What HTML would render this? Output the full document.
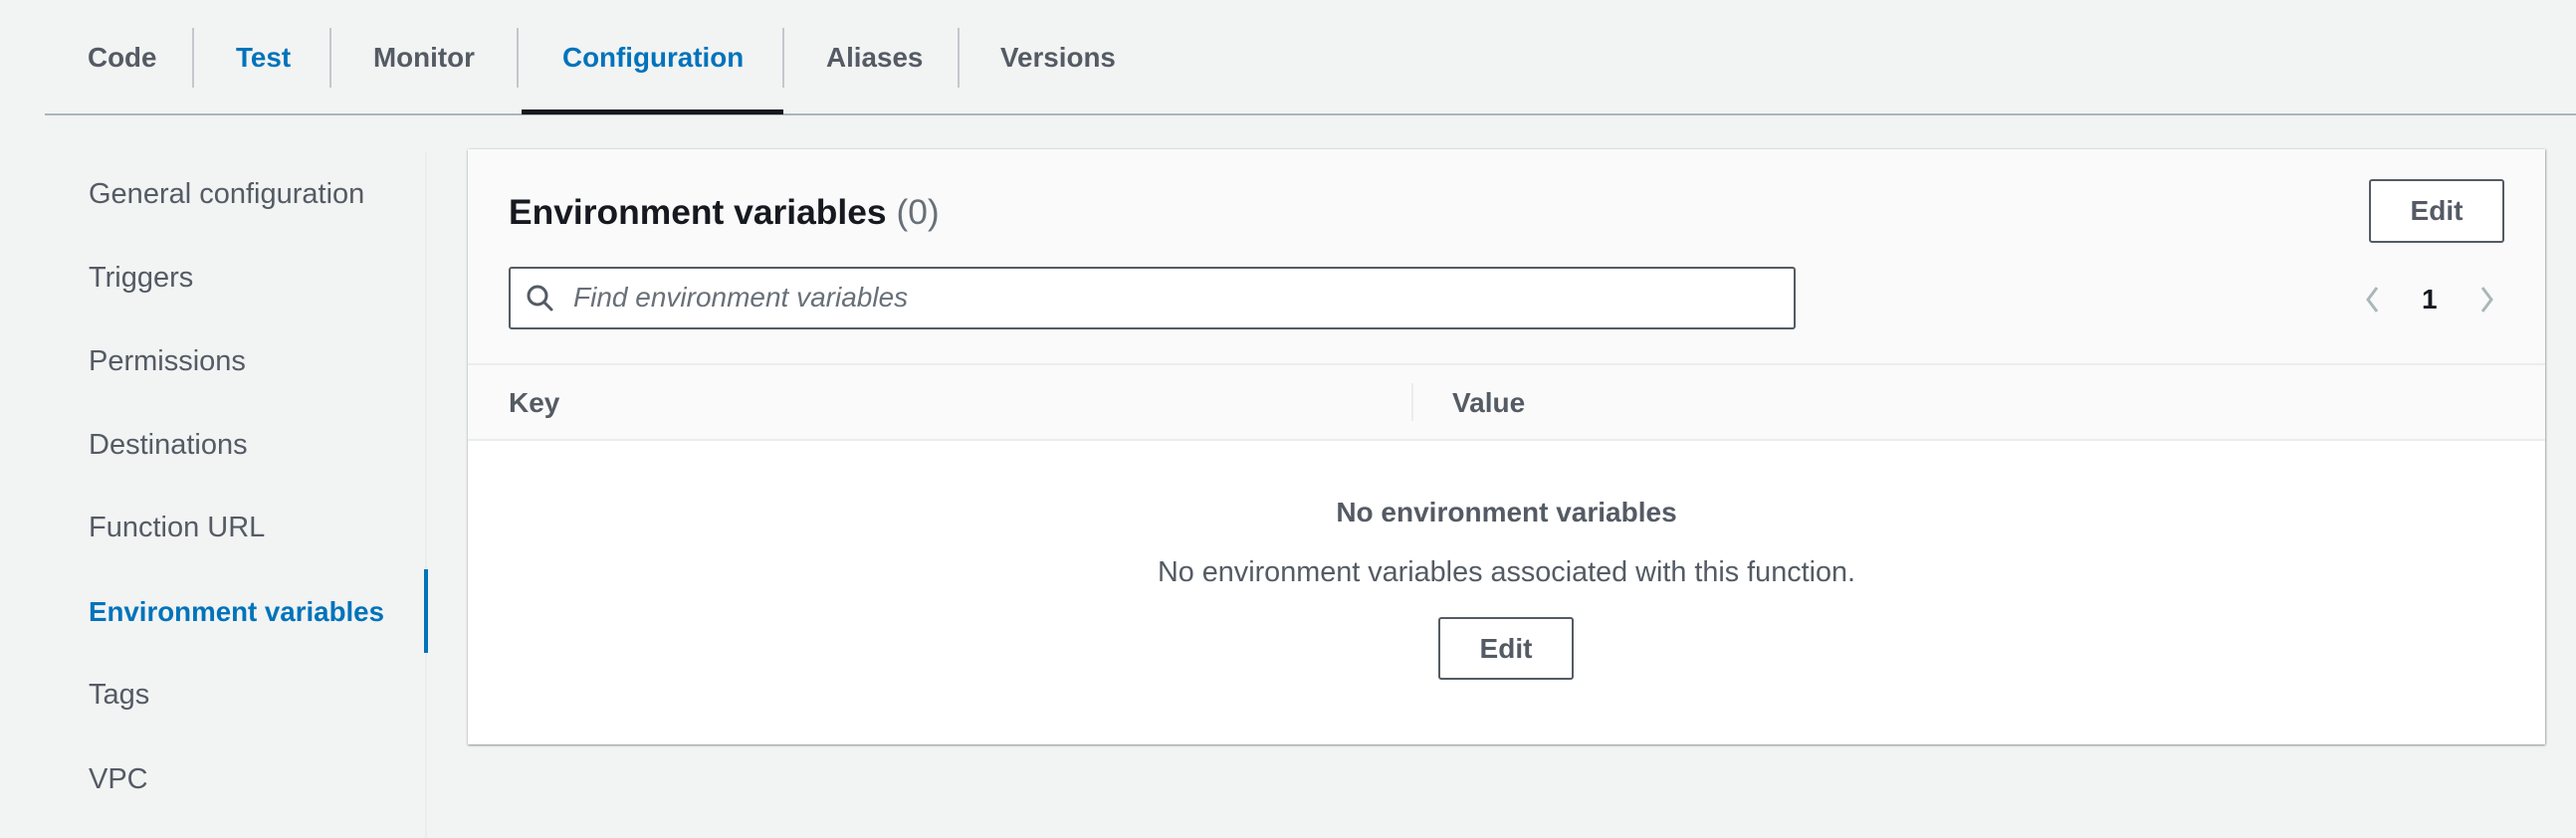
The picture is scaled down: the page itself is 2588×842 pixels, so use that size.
<!DOCTYPE html>
<html><head><meta charset="utf-8"><style>
*{margin:0;padding:0;box-sizing:border-box}
body{width:2588px;height:842px;background:#f2f3f3;font-family:"Liberation Sans",sans-serif;position:relative;overflow:hidden;color:#545b64}
.a{position:absolute;white-space:nowrap}
.tab{font-size:27.8px;font-weight:bold;color:#545b64;top:42px;line-height:32px}
.sep{position:absolute;top:28px;width:2px;height:60px;background:#c6c6cd}
.nav{font-size:29px;color:#545b64;left:89px;line-height:32px}
.btn{position:absolute;border:2px solid #545b64;border-radius:3px;background:#fff;font-size:28px;font-weight:bold;color:#545b64;text-align:center}
</style></head><body>
<div class="a tab" style="left:88px">Code</div>
<div class="sep" style="left:193px"></div>
<div class="a tab" style="left:237px;color:#0073bb">Test</div>
<div class="sep" style="left:331px"></div>
<div class="a tab" style="left:375px">Monitor</div>
<div class="sep" style="left:519px"></div>
<div class="a tab" style="left:565px;color:#0073bb">Configuration</div>
<div class="sep" style="left:786px"></div>
<div class="a tab" style="left:830px">Aliases</div>
<div class="sep" style="left:962px"></div>
<div class="a tab" style="left:1005px">Versions</div>
<div class="a" style="left:45px;top:114px;width:2543px;height:2px;background:#aab7b8"></div>
<div class="a" style="left:524px;top:110px;width:263px;height:5px;background:#16191f"></div>

<div class="a" style="left:427px;top:152px;width:2px;height:690px;background:#eaeded"></div>
<div class="a" style="left:426px;top:572px;width:4px;height:84px;background:#0073bb"></div>
<div class="a nav" style="top:179px">General configuration</div>
<div class="a nav" style="top:263px">Triggers</div>
<div class="a nav" style="top:347px">Permissions</div>
<div class="a nav" style="top:431px">Destinations</div>
<div class="a nav" style="top:514px">Function URL</div>
<div class="a nav" style="top:599px;color:#0073bb;font-weight:bold;font-size:27.7px">Environment variables</div>
<div class="a nav" style="top:682px">Tags</div>
<div class="a nav" style="top:767px">VPC</div>

<div class="a" style="left:470px;top:150px;width:2087px;height:598px;background:#fff;box-shadow:0 1px 2px rgba(0,28,36,.4),1px 0 2px rgba(0,28,36,.2)">
  <div class="a" style="left:0;top:0;width:2087px;height:293px;background:#fafafa;border-bottom:2px solid #eaeded"></div>
  <div class="a" style="left:0;top:215px;width:2087px;height:2px;background:#eaeded"></div>
  <div class="a" style="left:41px;top:42px;font-size:35.4px;font-weight:bold;color:#16191f;line-height:42px">Environment variables <span style="font-weight:normal;color:#687078">(0)</span></div>
  <div class="btn" style="left:1910px;top:30px;width:136px;height:64px;line-height:60px">Edit</div>
  <div class="a" style="left:41px;top:118px;width:1293px;height:63px;border:2px solid #545b64;border-radius:3px;background:#fff">
    <svg class="a" style="left:14px;top:14px" width="32" height="32" viewBox="0 0 32 32"><circle cx="13" cy="13" r="9" fill="none" stroke="#545b64" stroke-width="3"/><line x1="19.5" y1="19.5" x2="27" y2="27" stroke="#545b64" stroke-width="3" stroke-linecap="round"/></svg>
    <div class="a" style="left:63px;top:13px;font-size:28px;font-style:italic;color:#687078;line-height:32px">Find environment variables</div>
  </div>
  <svg class="a" style="left:1904px;top:136px" width="20" height="30" viewBox="0 0 20 30"><polyline points="14,3 5,15 14,27" fill="none" stroke="#aab7b8" stroke-width="3"/></svg>
  <div class="a" style="left:1963px;top:135px;font-size:28px;font-weight:bold;color:#16191f;line-height:32px">1</div>
  <svg class="a" style="left:2018px;top:136px" width="20" height="30" viewBox="0 0 20 30"><polyline points="6,3 15,15 6,27" fill="none" stroke="#aab7b8" stroke-width="3"/></svg>
  <div class="a" style="left:41px;top:239px;font-size:28px;font-weight:bold;color:#545b64;line-height:32px">Key</div>
  <div class="a" style="left:948px;top:235px;width:2px;height:38px;background:#eaeded"></div>
  <div class="a" style="left:989px;top:239px;font-size:28px;font-weight:bold;color:#545b64;line-height:32px">Value</div>
  <div class="a" style="left:0;width:2087px;top:349px;text-align:center;font-size:28px;font-weight:bold;color:#545b64;line-height:32px">No environment variables</div>
  <div class="a" style="left:0;width:2087px;top:409px;text-align:center;font-size:28.8px;color:#545b64;line-height:32px">No environment variables associated with this function.</div>
  <div class="btn" style="left:975px;top:470px;width:136px;height:63px;line-height:59px">Edit</div>
</div>
</body></html>
